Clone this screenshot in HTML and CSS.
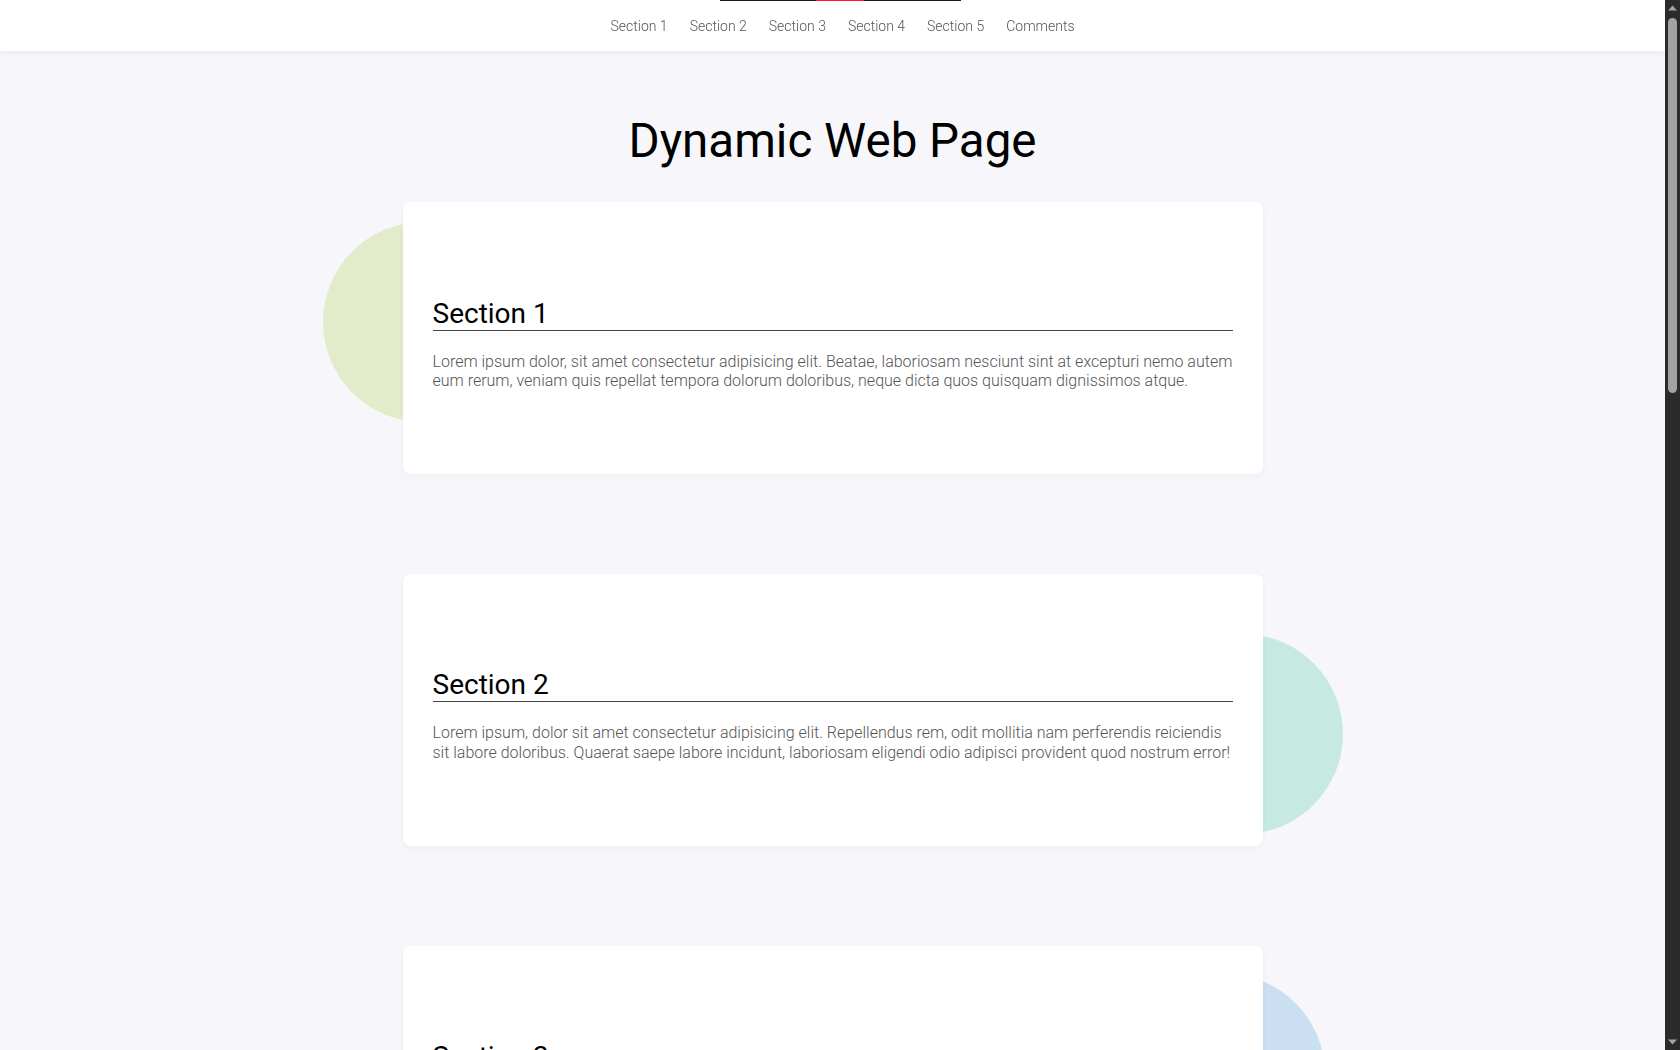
FILE: index.html
```html
<!DOCTYPE html>
<html lang="en">
<head>
<meta charset="utf-8">
<title>Dynamic Web Page</title>
<link rel="stylesheet" href="styles.css">
</head>
<body>
<header class="topbar">
  <div class="progress"><span class="progress-mark"></span></div>
  <nav>
    <ul class="nav-list">
      <li><a href="#s1">Section 1</a></li>
      <li><a href="#s2">Section 2</a></li>
      <li><a href="#s3">Section 3</a></li>
      <li><a href="#s4">Section 4</a></li>
      <li><a href="#s5">Section 5</a></li>
      <li><a href="#comments">Comments</a></li>
    </ul>
  </nav>
</header>

<div class="scrollbar" aria-hidden="true">
  <svg class="scroll-arrow" width="15" height="17" viewBox="0 0 15 17"><path d="M3 10.5 L7.5 5.5 L12 10.5 Z" fill="#a3a3a3"/></svg>
  <div class="scroll-track"><div class="scroll-thumb"></div></div>
  <svg class="scroll-arrow" width="15" height="17" viewBox="0 0 15 17"><path d="M3 6.5 L7.5 11.5 L12 6.5 Z" fill="#a3a3a3"/></svg>
</div>

<main class="page">
  <h1 class="title">Dynamic Web Page</h1>

  <section class="block" id="s1">
    <span class="blob blob-green blob-1"></span>
    <div class="card">
      <h2 class="card-title">Section 1</h2>
      <p class="card-text">Lorem ipsum dolor, sit amet consectetur adipisicing elit. Beatae, laboriosam nesciunt sint at excepturi nemo autem eum rerum, veniam quis repellat tempora dolorum doloribus, neque dicta quos quisquam dignissimos atque.</p>
    </div>
  </section>

  <section class="block" id="s2">
    <span class="blob blob-teal blob-2"></span>
    <div class="card">
      <h2 class="card-title">Section 2</h2>
      <p class="card-text">Lorem ipsum, dolor sit amet consectetur adipisicing elit. Repellendus rem, odit mollitia nam perferendis reiciendis sit labore doloribus. Quaerat saepe labore incidunt, laboriosam eligendi odio adipisci provident quod nostrum error!</p>
    </div>
  </section>

  <section class="block" id="s3">
    <span class="blob blob-blue blob-3"></span>
    <div class="card">
      <h2 class="card-title">Section 3</h2>
      <p class="card-text">Lorem ipsum dolor sit amet consectetur adipisicing elit. Architecto, eveniet! Molestias asperiores, dolorum expedita quibusdam nobis tenetur officia fugit porro minus, iure ipsa quas voluptatibus.</p>
    </div>
  </section>

  <section class="block" id="s4">
    <span class="blob blob-green blob-4"></span>
    <div class="card">
      <h2 class="card-title">Section 4</h2>
      <p class="card-text">Lorem ipsum dolor sit amet consectetur, adipisicing elit. Sed, dolores magnam. Perspiciatis ullam quod quisquam nesciunt voluptas, assumenda at eius repellendus cum incidunt.</p>
    </div>
  </section>

  <section class="block" id="s5">
    <span class="blob blob-teal blob-5"></span>
    <div class="card">
      <h2 class="card-title">Section 5</h2>
      <p class="card-text">Lorem ipsum dolor sit amet consectetur adipisicing elit. Quibusdam doloremque quo dolorum, laudantium cumque aperiam nemo vel tempore iusto voluptatum.</p>
    </div>
  </section>

  <section class="block" id="comments">
    <div class="card">
      <h2 class="card-title">Comments</h2>
      <p class="card-text">No comments yet. Be the first to share your thoughts.</p>
    </div>
  </section>
</main>
</body>
</html>
```

FILE: styles.css
```css
* {
  box-sizing: border-box;
}

html {
  background: #f7f7fb;
}

body {
  margin: 0;
  padding-right: 15px;
  background: #f7f7fb;
  color: #000;
  font-family: Roboto, "Liberation Sans", Arial, sans-serif;
}

/* top navigation */
.topbar {
  position: fixed;
  top: 0;
  left: 0;
  right: 15px;
  height: 51px;
  background: #fff;
  box-shadow: 0 2px 6px rgba(0, 0, 0, 0.06);
  z-index: 10;
}

.progress {
  position: absolute;
  top: 0;
  left: 720px;
  width: 241px;
  height: 1px;
  background: #1b1b1b;
}

.progress-mark {
  position: absolute;
  top: 0;
  left: 96px;
  width: 48px;
  height: 1px;
  background: #ff1a2a;
}

.nav-list {
  list-style: none;
  margin: 0;
  padding: 0 0 0 20px;
  height: 51px;
  display: flex;
  justify-content: center;
  align-items: center;
}

.nav-list a {
  display: block;
  padding: 0 11px;
  font-size: 14px;
  font-weight: 300;
  color: #555;
  text-decoration: none;
}

/* fake scrollbar */
.scrollbar {
  position: fixed;
  top: 0;
  right: 0;
  bottom: 0;
  width: 15px;
  background: #2b2b2b;
  display: flex;
  flex-direction: column;
  z-index: 20;
}

.scroll-arrow {
  display: block;
  flex: none;
}

.scroll-track {
  flex: 1;
  padding: 1px 3px;
}

.scroll-thumb {
  width: 9px;
  height: 375px;
  border-radius: 5px;
  background: #a3a3a3;
}

/* content */
.page {
  padding: 113px 0 400px;
}

.title {
  margin: 0 0 33px;
  text-align: center;
  font-size: 47.5px;
  font-weight: 400;
  color: #000;
}

.block {
  position: relative;
  width: 860px;
  margin: 0 auto 100px;
}

.card {
  position: relative;
  z-index: 1;
  background: #fff;
  border-radius: 8px;
  box-shadow: 0 2px 6px rgba(0, 0, 0, 0.04);
  padding: 94.5px 30px 84px;
}

.card-title {
  margin: 0;
  font-size: 28px;
  font-weight: 400;
  color: #000;
  border-bottom: 1px solid #444;
}

.card-text {
  margin: 21px 0 0;
  font-size: 16px;
  font-weight: 300;
  color: #555;
  line-height: 19.2px;
}

.blob {
  position: absolute;
  width: 200px;
  height: 200px;
  border-radius: 50%;
  z-index: 0;
}

.blob-green { background: #e3ecca; }
.blob-teal { background: #c6e9e1; }
.blob-blue { background: #cbdff3; }

.blob-1 { left: -80px; top: 20px; }
.blob-2 { left: 740px; top: 60px; }
.blob-3 { left: 722px; top: 28px; }
.blob-4 { left: -90px; top: 40px; }
.blob-5 { left: 730px; top: 50px; }
```
